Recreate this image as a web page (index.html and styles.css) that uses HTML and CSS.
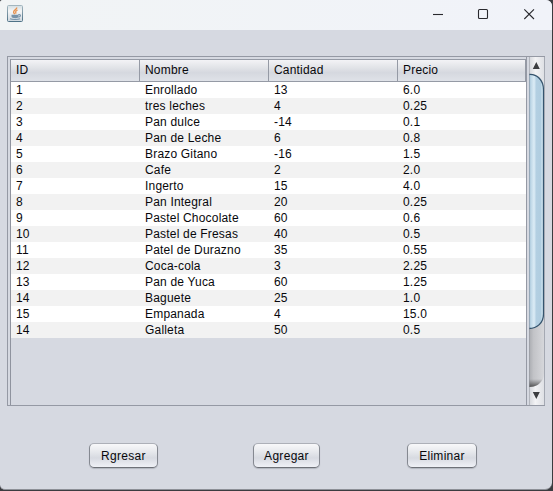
FILE: index.html
```html
<!DOCTYPE html>
<html lang="es">
<head>
<meta charset="utf-8">
<title>Productos</title>
<link rel="stylesheet" href="styles.css">
</head>
<body>
<div class="window">
  <header class="titlebar">
    <svg class="java" width="16" height="17" viewBox="0 0 16 17">
      <defs><linearGradient id="ji" x1="0" y1="0" x2="0" y2="1"><stop offset="0" stop-color="#d3dee3"/><stop offset=".35" stop-color="#f5f6f7"/><stop offset="1" stop-color="#cfd8df"/></linearGradient><linearGradient id="jb" x1="0" y1="0" x2="0" y2="1"><stop offset="0" stop-color="#a3b6bf"/><stop offset="1" stop-color="#4f7287"/></linearGradient></defs>
      <rect x=".5" y=".5" width="15" height="16" rx="1" fill="url(#ji)" stroke="url(#jb)"/>
      <path d="M9.8 2.5C10 4.6 6.2 5.2 6.6 7.2c.1.8.8 1.3 1 2M10.6 5C8.5 6 8.3 7 9.1 8.6" fill="none" stroke="#e8904c" stroke-width="1.3"/>
      <path d="M4.5 9.8h7v1.7c0 1.2-1.3 1.7-3.3 1.7s-3.7-.5-3.7-1.7z" fill="#7892a8"/>
      <path d="M11.2 9.7c3-.7 3 2.1.1 2.4M3 13.7c2 1 8 1 10 0" fill="none" stroke="#7892a8" stroke-width="1.1"/>
    </svg>
    <svg class="controls" width="104" height="12" viewBox="0 0 104 12" fill="none" stroke="#29292e" stroke-width="1.1">
      <path d="M0 6.5h10"/>
      <rect x="45.5" y="1.5" width="9" height="9" rx="1"/>
      <path d="M91.3 1.3l9.7 9.7M101 1.3L91.3 11"/>
    </svg>
  </header>
  <main class="content">
    <div class="scrollpane">
      <div class="viewport">
        <table class="grid">
          <thead><tr><th>ID</th><th>Nombre</th><th>Cantidad</th><th>Precio</th></tr></thead>
          <tbody>
            <tr><td>1</td><td>Enrollado</td><td>13</td><td>6.0</td></tr>
            <tr><td>2</td><td>tres leches</td><td>4</td><td>0.25</td></tr>
            <tr><td>3</td><td>Pan dulce</td><td>-14</td><td>0.1</td></tr>
            <tr><td>4</td><td>Pan de Leche</td><td>6</td><td>0.8</td></tr>
            <tr><td>5</td><td>Brazo Gitano</td><td>-16</td><td>1.5</td></tr>
            <tr><td>6</td><td>Cafe</td><td>2</td><td>2.0</td></tr>
            <tr><td>7</td><td>Ingerto</td><td>15</td><td>4.0</td></tr>
            <tr><td>8</td><td>Pan Integral</td><td>20</td><td>0.25</td></tr>
            <tr><td>9</td><td>Pastel Chocolate</td><td>60</td><td>0.6</td></tr>
            <tr><td>10</td><td>Pastel de Fresas</td><td>40</td><td>0.5</td></tr>
            <tr><td>11</td><td>Patel de Durazno</td><td>35</td><td>0.55</td></tr>
            <tr><td>12</td><td>Coca-cola</td><td>3</td><td>2.25</td></tr>
            <tr><td>13</td><td>Pan de Yuca</td><td>60</td><td>1.25</td></tr>
            <tr><td>14</td><td>Baguete</td><td>25</td><td>1.0</td></tr>
            <tr><td>15</td><td>Empanada</td><td>4</td><td>15.0</td></tr>
            <tr><td>14</td><td>Galleta</td><td>50</td><td>0.5</td></tr>
          </tbody>
        </table>
      </div>
      <svg class="scrollbar" width="16" height="348" viewBox="0 0 16 348">
        <defs>
          <linearGradient id="track"><stop offset="0" stop-color="#a9abb0"/><stop offset=".3" stop-color="#c2c3c7"/><stop offset="1" stop-color="#d6d7db"/></linearGradient>
          <linearGradient id="thumb"><stop offset="0" stop-color="#8fb1ca"/><stop offset=".12" stop-color="#bdd6e6"/><stop offset=".35" stop-color="#dcecf6"/><stop offset=".5" stop-color="#b3cfe2"/><stop offset=".8" stop-color="#b0cde0"/><stop offset="1" stop-color="#e0f2fb"/></linearGradient>
          <linearGradient id="btn"><stop offset="0" stop-color="#d3d5da"/><stop offset=".4" stop-color="#f3f3f5"/><stop offset="1" stop-color="#dcdee3"/></linearGradient>
          <linearGradient id="shade" x1="0" y1="0" x2="0" y2="1"><stop offset="0" stop-color="#555" stop-opacity="0"/><stop offset="1" stop-color="#444" stop-opacity=".9"/></linearGradient>
        </defs>
        <rect width="16" height="348" fill="url(#btn)"/>
        <path d="M0 17C9 17 15 22 15 33V316C15 325 9 330 0 330z" fill="url(#track)"/>
        <path d="M0 322h13.5C11 327 7 330 0 330z" fill="url(#shade)"/>
        <path d="M0 17.5C8 17 14.5 23 14.5 33V257C14.5 266 8 271.5 0 271.5z" fill="url(#thumb)"/>
        <path d="M0 17.5C8 17 14.5 23 14.5 33V257C14.5 266 8 271.5 0 271.5" fill="none" stroke="#35546e" stroke-width="1.3"/>
        <path d="M0 0V348" stroke="#8f939d" stroke-width="1"/>
        <path d="M15.5 0V348" stroke="#a5a9b3"/>
        <path d="M7.3 5L10.8 12H3.8zM3.8 335h7L7.3 342z" fill="#3c3d40"/>
      </svg>
    </div>
    <div class="actions">
      <button class="btn back">Rgresar</button>
      <button class="btn add">Agregar</button>
      <button class="btn remove">Eliminar</button>
    </div>
  </main>
</div>
</body>
</html>
```
FILE: styles.css
```css
* { box-sizing: border-box; }
body {
  margin: 0;
  height: 491px;
  overflow: hidden;
  background: #3b3c40;
  font: 12px/16px "Liberation Sans", Arial, sans-serif;
  letter-spacing: .19px;
  color: #08080c;
}
.window {
  width: 552px;
  height: 490px;
  background: #d6d9e1;
  border-radius: 3px 6px 7px 5px;
  border-bottom: 1px solid #8d9097;
  overflow: hidden;
}
.titlebar {
  height: 30px;
  display: flex;
  justify-content: space-between;
  align-items: flex-start;
  padding: 5px 15px 0 7px;
  background: linear-gradient(90deg, #f1f4f5, #f1f3f9);
}
.controls { margin-top: 3px; }
.content { padding: 26px 7px 0; }
.scrollpane {
  width: 538px;
  height: 350px;
  display: flex;
  border: 1px solid #9599a4;
  border-right: 0;
}
.viewport {
  width: 519px;
  height: 348px;
  margin-right: 2px;
  padding: 2px 0 0 2px;
  border-right: 1px solid #9599a4;
  background: linear-gradient(#8f939e, #8f939e) 2px 2px / 1px 100% no-repeat;
}
.grid {
  width: 515px;
  margin-left: 1px;
  table-layout: fixed;
  border-collapse: separate;
  border-spacing: 0;
}
th, td { padding: 0 0 0 5px; text-align: left; font-weight: normal; white-space: nowrap; }
th {
  height: 23px;
  width: 129px;
  padding-bottom: 2px;
  border-right: 1px solid #959aa5;
  border-top: 1px solid #959aa5;
  border-bottom: 1px solid #959aa5;
  background: linear-gradient(#f3f3f6 0, #e2e4e8 35%, #d5d8df 60%, #dfe2e8 100%);
}
th:last-child { width: 128px; }
td { height: 16px; background: #fff; }
tbody tr:nth-child(even) td { background: #f2f2f2; }
.actions { display: flex; margin: 37px 0 0 82px; }
.btn {
  height: 25px;
  padding: 0;
  font: inherit;
  letter-spacing: .3px;
  color: inherit;
  border: 1px solid #91959d;
  border-color: #adb0b8 #858991 #6e7178;
  border-radius: 5px;
  background: linear-gradient(#f8f8fa 0, #e6e8ec 35%, #d7dae1 60%, #eff1f6 100%);
  box-shadow: 0 1px 1px #b2b6bf;
}
.back { width: 69px; }
.add { width: 67px; margin-left: 95px; }
.remove { width: 70px; margin-left: 87px; }
```
